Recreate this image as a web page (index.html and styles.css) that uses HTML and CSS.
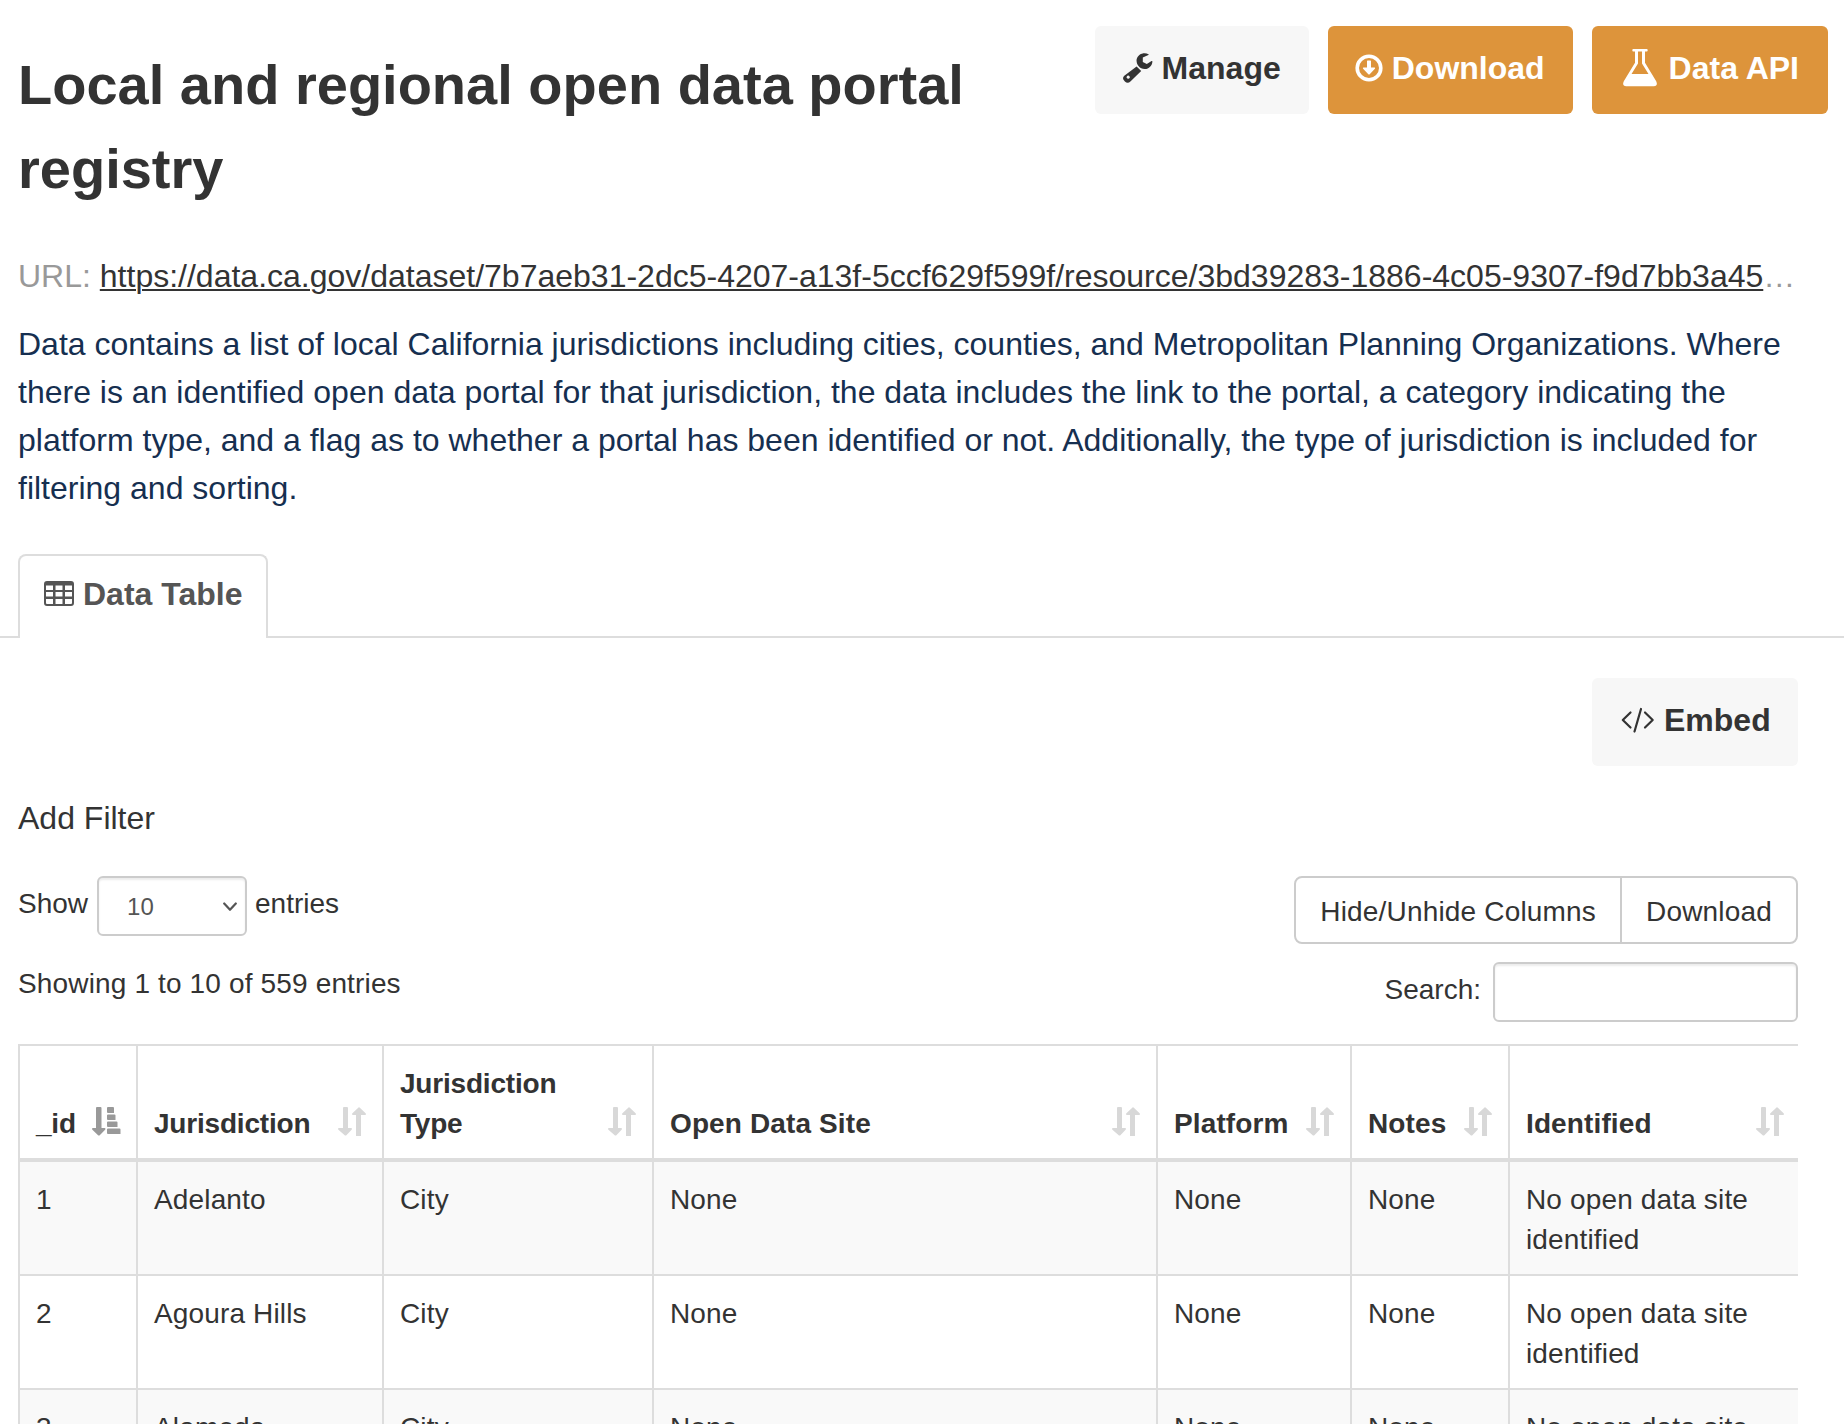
FILE: index.html
```html
<!DOCTYPE html>
<html lang="en">
<head>
<meta charset="utf-8">
<title>Local and regional open data portal registry</title>
<link rel="stylesheet" href="styles.css">
</head>
<body>
<svg width="0" height="0" class="defs">
  <symbol id="sort" viewBox="0 0 28 29"><path d="M5 1q0-1 1-1h3q1 0 1 1v20h3q1.600.3.600 1.700L8.600 28q-1.100 1.100-2.200 0L.4 22.700q-1-1.400.6-1.700h4zM18 29V8h-3q-1.600-.3-.6-1.700L20 .9q1-1.100 2.100 0l5.500 5.400q1 1.400-.6 1.700h-4v21z"/></symbol>
  <symbol id="sort-asc" viewBox="0 0 29 29"><path d="M4 1q0-1 1-1h3.500q1 0 1 1v20h3q1.600.3.600 1.700L8 28q-1.100 1.100-2.200 0L.4 22.700q-1-1.400.6-1.700h3zM16 0h5q1 0 1 1v5h-6q-1 0-1-1V1q0-1 1-1zM16 7.500h6.500q1 0 1 1v4.500H16q-1 0-1-1V8.500q0-1 1-1zM16 14.500h8.500q1 0 1 1V20H16q-1 0-1-1v-3.500q0-1 1-1zM16 21.500h11.500q1 0 1 1v4.500H16q-1 0-1-1v-3.500q0-1 1-1z"/></symbol>
</svg>
<main class="page">
  <header class="head">
    <h1>Local and regional open data portal registry</h1>
    <div class="actions">
      <a class="btn"><svg class="wrench" width="30" height="30" viewBox="0 0 30 30"><path fill-rule="evenodd" d="M13.600 13.400l4.600 4.600L7.400 28.400a3.900 3.900 0 0 1-5.500 0l-.6-.6a3.500 3.500 0 0 1 0-5zM5.200 22.600a1.600 1.600 0 1 0 .01 0z"/><path d="M25.500 1.200C21 -.9 15 .8 13.600 6.500c-.6 4.900 2.900 9.700 8.400 9.500 3.800-.2 7.300-3.200 7.400-7.600-.2-.5-.8-.5-1.200-.2l-4.400 2.800-4-2V4.600l5.600-2.500c.4-.3.500-.6.100-.9z"/></svg>Manage</a>
      <a class="btn primary dl"><svg width="28" height="28" viewBox="0 0 28 28"><circle class="line" cx="14" cy="14" r="11.800" stroke-width="3.600"/><path d="M12 7q0-.6.600-.6h2.800q.6 0 .6.600v6.500h3.600q1 .3.300 1.200l-5.200 5.600q-.7.600-1.400 0l-5.200-5.600q-.7-.9.300-1.200H12z"/></svg>Download</a>
      <a class="btn primary api"><svg width="36" height="38" viewBox="0 0 36 38"><path fill-rule="evenodd" d="M11.300 0h13.400q1 0 1 1.200t-1 1.200h-1.700v11.400l11.200 18.500q2.100 4.700-2.400 5H4.200q-4.500-.3-2.400-5L13 13.800V2.400h-1.700q-1 0-1-1.200t1-1.200zM16 2.400v12.200L9.500 25h17L20 14.600V2.400z"/></svg>Data API</a>
    </div>
  </header>
  <p class="url">URL: <a>https://data.ca.gov/dataset/7b7aeb31-2dc5-4207-a13f-5ccf629f599f/resource/3bd39283-1886-4c05-9307-f9d7bb3a45</a>…</p>
  <p class="desc">Data contains a list of local California jurisdictions including cities, counties, and Metropolitan Planning Organizations. Where there is an identified open data portal for that jurisdiction, the data includes the link to the portal, a category indicating the platform type, and a flag as to whether a portal has been identified or not. Additionally, the type of jurisdiction is included for filtering and sorting.</p>
  <nav class="tabs"><a class="tab"><svg width="30" height="26" viewBox="0 0 30 26"><path fill-rule="evenodd" d="M3 0h24q3 0 3 3v19q0 3-3 3H3q-3 0-3-3V3q0-3 3-3zM2 4.500V9h7V4.500zM11.500 4.500V9h7V4.500zM21 4.500V9h7V4.500zM2 11v4.500h7V11zM11.500 11v4.500h7V11zM21 11v4.500h7V11zM2 18v4q0 1 1 1h6v-5zM11.500 18v5h7v-5zM21 18v5h6q1 0 1-1v-4z"/></svg>Data Table</a></nav>
  <section class="view">
    <a class="btn embed"><svg width="34" height="26" viewBox="0 0 34 26"><path class="line" stroke-width="2.200" d="M9.500 5.500L1.800 13l7.700 7.500M24 5.500l7.700 7.500-7.700 7.500M20 2l-6.500 22.500"/></svg>Embed</a>
    <div class="filter">Add Filter</div>
    <div class="controls">
      <div class="left">
        <div class="length">Show <span class="select">10<svg width="14" height="10" viewBox="0 0 14 10"><path class="line" stroke-width="2.200" d="M1.200 1.500L7 7.800l5.800-6.300"/></svg></span> entries</div>
        <div class="info">Showing 1 to 10 of 559 entries</div>
      </div>
      <div class="right">
        <div class="group"><a>Hide/Unhide Columns</a><a>Download</a></div>
        <label class="search">Search:<input type="text"></label>
      </div>
    </div>
    <table>
      <colgroup><col class="c-id"><col class="c-jur"><col class="c-type"><col class="c-site"><col class="c-plat"><col class="c-notes"><col class="c-ident"></colgroup>
      <thead><tr>
        <th class="tight"><div>_id<svg class="asc"><use href="#sort-asc"/></svg></div></th>
        <th class="tight"><div>Jurisdiction<svg><use href="#sort"/></svg></div></th>
        <th class="tight"><div>Jurisdiction<br>Type<svg><use href="#sort"/></svg></div></th>
        <th><div>Open Data Site<svg><use href="#sort"/></svg></div></th>
        <th><div>Platform<svg><use href="#sort"/></svg></div></th>
        <th><div>Notes<svg><use href="#sort"/></svg></div></th>
        <th class="last"><div>Identified<svg><use href="#sort"/></svg></div></th>
      </tr></thead>
      <tbody>
        <tr><td>1</td><td>Adelanto</td><td>City</td><td>None</td><td>None</td><td>None</td><td>No open data site identified</td></tr>
        <tr><td>2</td><td>Agoura Hills</td><td>City</td><td>None</td><td>None</td><td>None</td><td>No open data site identified</td></tr>
        <tr><td>3</td><td>Alameda</td><td>City</td><td>None</td><td>None</td><td>None</td><td>No open data site</td></tr>
      </tbody>
    </table>
  </section>
</main>
</body>
</html>
```
FILE: styles.css
```css
* { box-sizing: border-box; }
html, body { margin: 0; height: 100%; overflow: hidden; }
body {
  background: #fff;
  color: #333;
  font: 28px/40px "Liberation Sans", Arial, sans-serif;
}
svg { fill: currentColor; flex: none; }
.line {
  fill: none;
  stroke: currentColor;
  stroke-linecap: round;
  stroke-linejoin: round;
}
.defs { display: none; }
.page { height: 1424px; overflow: hidden; }

.head {
  display: flex;
  justify-content: space-between;
  align-items: flex-start;
  padding: 26px 16px 0 18px;
  height: 252px;
}
h1 {
  width: 1040px;
  margin: 17px 0 0;
  font-size: 56px;
  line-height: 84px;
}
.actions { display: flex; gap: 19px; }
.btn {
  display: flex;
  align-items: center;
  gap: 9px;
  height: 88px;
  padding: 0 28px 4px;
  border-radius: 6px;
  background: #f7f7f7;
  color: #333;
  font-size: 32px;
  font-weight: bold;
  white-space: nowrap;
}
.primary { background: #dd943b; color: #fff; }
.dl { padding-left: 27px; }
.api { padding: 0 29px 4px 30px; gap: 11px; }

.url, .desc {
  margin: 0;
  padding: 0 18px;
  font-size: 32px;
  line-height: 48px;
}
.url { color: #999; white-space: nowrap; }
.url a {
  color: #333;
  text-decoration: underline;
  text-decoration-thickness: 2px;
  text-underline-offset: 2px;
}
.desc { margin-top: 20px; color: #162f50; width: 1820px; }

.tabs {
  display: flex;
  margin-top: 42px;
  padding-left: 18px;
  height: 84px;
  box-shadow: inset 0 -2px #ddd;
}
.tab {
  display: flex;
  align-items: center;
  gap: 9px;
  width: 250px;
  padding: 0 0 7px 24px;
  border: 2px solid #ddd;
  border-bottom: 0;
  border-radius: 8px 8px 0 0;
  background: #fff;
  color: #555;
  font-size: 32px;
  font-weight: bold;
}

.view { padding: 40px 46px 0 18px; }
.embed { width: 206px; margin-left: auto; padding-left: 29px; }
.filter { margin-top: 32px; font-size: 32px; }
.controls {
  display: flex;
  justify-content: space-between;
  margin-top: 38px;
  height: 168px;
}
.length { display: flex; gap: 8px; line-height: 56px; height: 60px; }
.select {
  display: flex;
  align-items: center;
  justify-content: space-between;
  width: 150px;
  height: 60px;
  margin-left: 1px;
  padding: 2px 8px 0 28px;
  border: 2px solid #ccc;
  border-radius: 6px;
  box-shadow: inset 0 2px 2px rgba(0, 0, 0, .075);
  color: #555;
  font-size: 24px;
}
.info { margin-top: 28px; letter-spacing: .15px; }
.right { display: flex; flex-direction: column; align-items: flex-end; }
.group {
  display: flex;
  height: 68px;
  border: 2px solid #ccc;
  border-radius: 8px;
  letter-spacing: .18px;
}
.group a { padding: 2px 24px 0; height: 64px; line-height: 64px; }
.group a + a { border-left: 2px solid #ccc; }
.search { display: flex; gap: 12px; margin-top: 18px; line-height: 56px; }
.search input {
  width: 305px;
  height: 60px;
  padding: 0 12px;
  border: 2px solid #ccc;
  border-radius: 6px;
  background: #fff;
  box-shadow: inset 0 2px 2px rgba(0, 0, 0, .075);
  font: inherit;
}

table {
  width: 1780px;
  table-layout: fixed;
  border-spacing: 0;
  border-top: 2px solid #ddd;
}
.c-id { width: 118px; }
.c-jur { width: 246px; }
.c-type { width: 270px; }
.c-site { width: 504px; }
.c-plat { width: 194px; }
.c-notes { width: 158px; }
.c-ident { width: 290px; }
th, td {
  padding: 18px 16px 14px;
  border-left: 2px solid #ddd;
  text-align: left;
  vertical-align: top;
}
th { border-bottom: 4px solid #ddd; vertical-align: bottom; letter-spacing: .12px; }
th.tight { letter-spacing: -.2px; }
th.last { padding-right: 14px; }
th div { position: relative; white-space: nowrap; }
th svg {
  position: absolute;
  right: 0;
  bottom: 8px;
  width: 28px;
  height: 29px;
  color: #d8d8d8;
}
th svg.asc { right: -1px; width: 29px; color: #999; }
td { border-bottom: 2px solid #ddd; letter-spacing: .15px; }
tbody tr:nth-child(odd) { background: #f9f9f9; }
```
